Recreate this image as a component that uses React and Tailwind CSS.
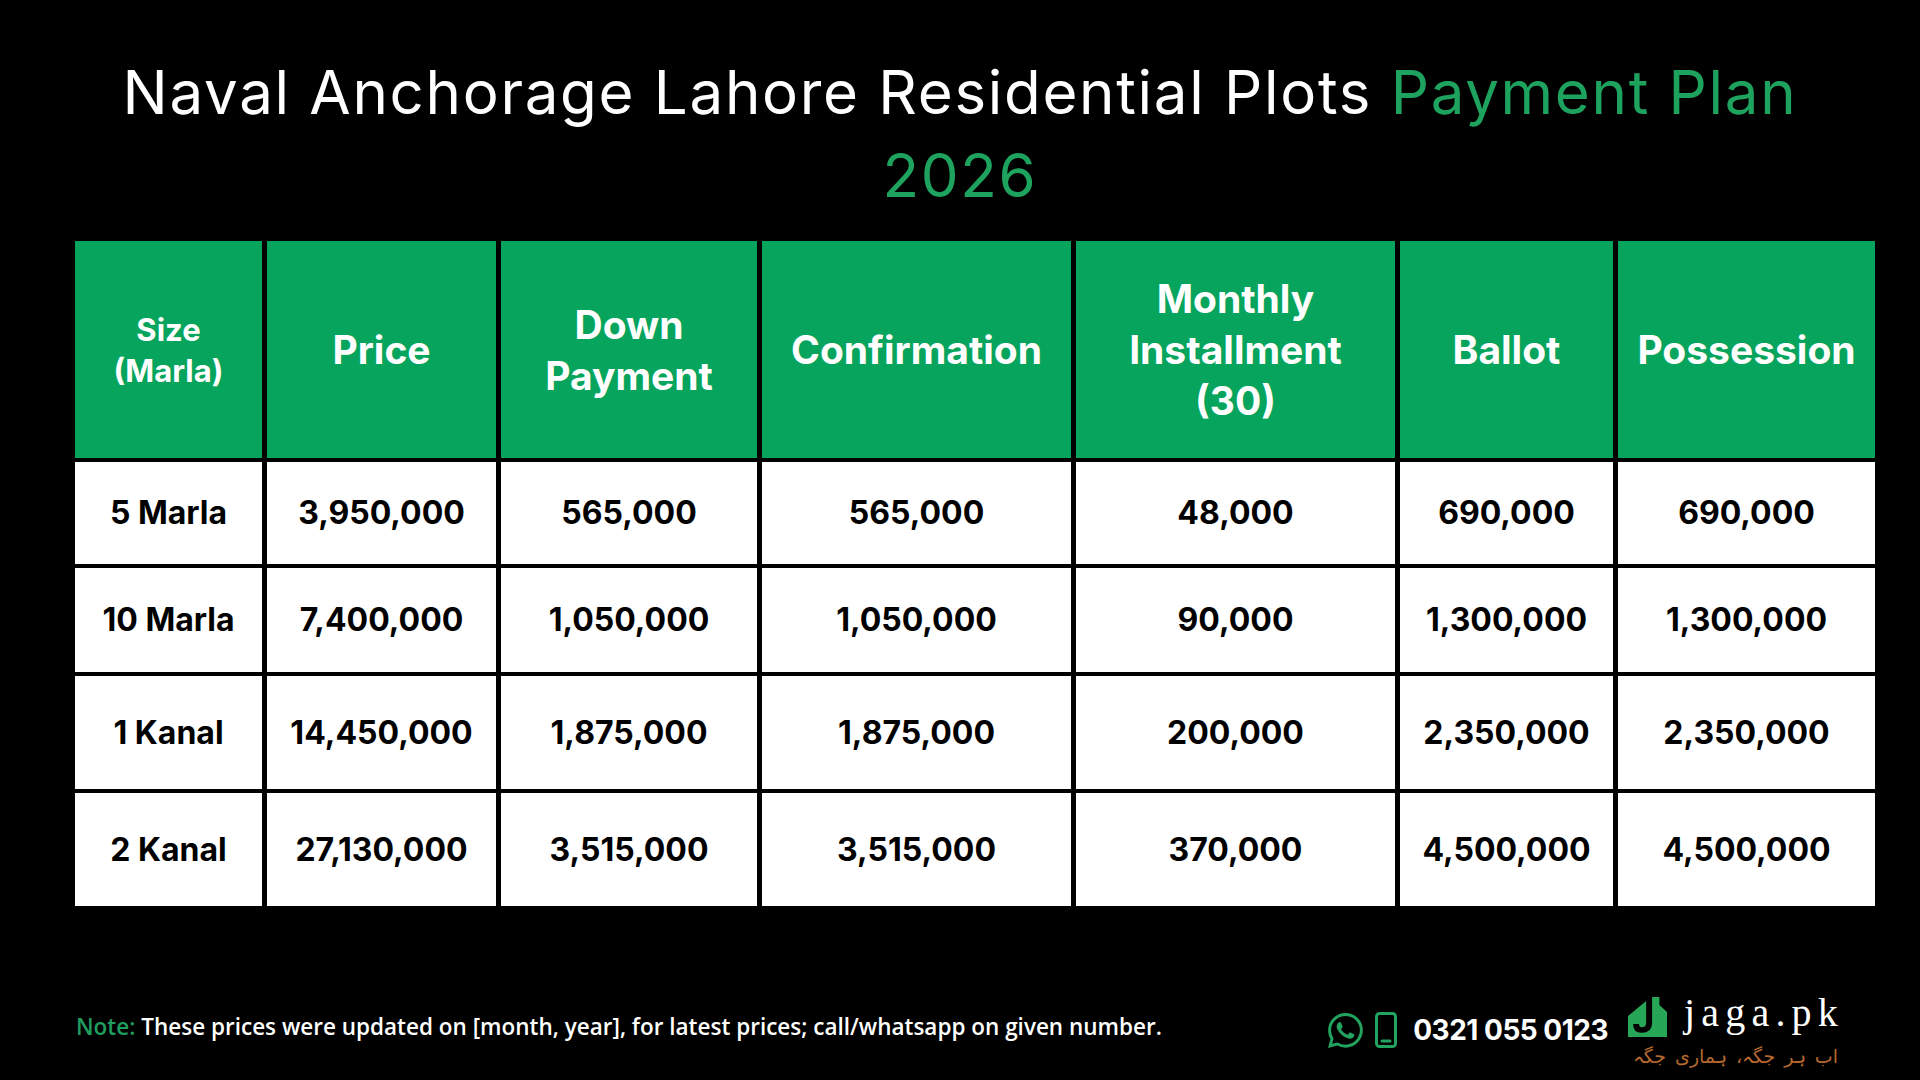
import React from "react";

const headers = [
  { label: ["Size", "(Marla)"], small: true },
  { label: ["Price"] },
  { label: ["Down", "Payment"] },
  { label: ["Confirmation"] },
  { label: ["Monthly", "Installment", "(30)"] },
  { label: ["Ballot"] },
  { label: ["Possession"] },
];

const rows = [
  ["5 Marla", "3,950,000", "565,000", "565,000", "48,000", "690,000", "690,000"],
  ["10 Marla", "7,400,000", "1,050,000", "1,050,000", "90,000", "1,300,000", "1,300,000"],
  ["1 Kanal", "14,450,000", "1,875,000", "1,875,000", "200,000", "2,350,000", "2,350,000"],
  ["2 Kanal", "27,130,000", "3,515,000", "3,515,000", "370,000", "4,500,000", "4,500,000"],
];

const WhatsAppIcon = () => (
  <svg width="35" height="35" viewBox="0 0 16 16" fill="#22a35f">
    <path d="M13.601 2.326A7.854 7.854 0 0 0 7.994 0C3.627 0 .068 3.558.064 7.926c0 1.399.366 2.76 1.057 3.965L0 16l4.204-1.102a7.933 7.933 0 0 0 3.79.965h.004c4.368 0 7.926-3.558 7.930-7.930A7.898 7.898 0 0 0 13.6 2.326zM7.994 14.521a6.573 6.573 0 0 1-3.356-.92l-.24-.144-2.494.654.666-2.433-.156-.251a6.56 6.56 0 0 1-1.007-3.505c0-3.626 2.957-6.584 6.591-6.584a6.560 6.560 0 0 1 4.66 1.931 6.557 6.557 0 0 1 1.928 4.66c-.004 3.639-2.961 6.592-6.592 6.592zm3.615-4.934c-.197-.099-1.17-.578-1.353-.646-.182-.065-.315-.099-.445.099-.133.197-.513.646-.627.775-.114.133-.232.148-.43.05-.197-.1-.836-.308-1.592-.985-.59-.525-.985-1.175-1.103-1.372-.114-.198-.011-.304.088-.403.087-.088.197-.232.296-.346.1-.114.133-.198.198-.33.065-.134.034-.248-.015-.347-.05-.099-.445-1.076-.612-1.47-.16-.389-.323-.335-.445-.34-.114-.007-.247-.007-.38-.007a.729.729 0 0 0-.529.247c-.182.198-.691.677-.691 1.654 0 .977.71 1.916.81 2.049.098.133 1.394 2.132 3.383 2.992.47.205.84.326 1.129.418.475.152.904.129 1.246.08.38-.058 1.171-.48 1.338-.943.164-.464.164-.86.114-.943-.049-.084-.182-.133-.38-.232z" />
  </svg>
);

const PhoneIcon = () => (
  <svg width="22" height="36" viewBox="0 0 22 36" fill="none" stroke="#22a35f" strokeWidth="3">
    <rect x="1.5" y="1.5" width="19" height="33" rx="3" />
    <line x1="7" y1="29" x2="15" y2="29" strokeLinecap="round" />
  </svg>
);

// green house with a black "J" cut through it
const HouseLogo = () => (
  <svg width="39" height="40" viewBox="0 0 36 40" className="mt-[4px]" preserveAspectRatio="none">
    <polygon points="0,40 0,19 19,2 22,2 22,0 29,0 29,8 36,15 36,40" fill="#27a658" />
    <path d="M19.5 0 V26 Q19.5 33 12.5 33 Q7.5 33 7.5 27" fill="none" stroke="#000" strokeWidth="5.5" />
  </svg>
);

export default function App() {
  return (
    <div className="w-[1920px] h-[1080px] bg-black flex flex-col overflow-hidden" style={{ fontFamily: "Inter, 'Open Sans', sans-serif" }}>
      {/* Title */}
      <h1 className="pt-[51px] text-center text-[60px] leading-[83px] font-normal text-white tracking-[1.7px]">
        Naval Anchorage Lahore Residential Plots <span className="text-[#1ea35f]">Payment Plan</span>
        <br />
        <span className="text-[#1ea35f]">2026</span>
      </h1>

      {/* Payment table */}
      <div className="ml-[75px] mt-[24px] grid grid-cols-[187px_229px_256px_309px_319px_213px_257px] grid-rows-[217px_102px_104px_113px_113px] gap-x-[5px] gap-y-[4px]">
        {headers.map((h, i) => (
          <div
            key={i}
            className={
              h.small
                ? "bg-[#06a45c] flex flex-col items-center justify-center text-white font-bold text-[31px] leading-[41px]"
                : "bg-[#06a45c] flex flex-col items-center justify-center text-white font-bold text-[39px] leading-[51px]"
            }
          >
            {h.label.map((l) => (
              <span key={l}>{l}</span>
            ))}
          </div>
        ))}
        {rows.map((r, ri) =>
          r.map((c, ci) => (
            <div key={ri + "-" + ci} className="bg-white flex items-center justify-center text-black font-bold text-[32px]">
              {c}
            </div>
          ))
        )}
      </div>

      {/* Footer */}
      <div className="mt-[84px] h-[80px] pl-[76px] pr-[82px] flex items-center justify-between">
        <p className="pb-[6px] text-[22.5px] leading-[30px] font-semibold text-white" style={{ fontFamily: "'Open Sans', sans-serif" }}>
          <span className="text-[#1f9d5e]">Note:</span> These prices were updated on [month, year], for latest prices; call/whatsapp on given number.
        </p>

        <div className="flex items-center">
          <WhatsAppIcon />
          <div className="ml-[12px]">
            <PhoneIcon />
          </div>
          <span className="ml-[16px] text-white font-bold text-[28px] tracking-[-0.5px]">0321 055 0123</span>
          <div className="ml-[20px] flex flex-col items-end">
            <div className="flex items-start gap-[17px]">
              <HouseLogo />
              <span className="mr-[-6px] text-white text-[40px] leading-[40px] tracking-[6.2px]" style={{ fontFamily: "'Liberation Serif', serif" }}>
                jaga.pk
              </span>
            </div>
            <span dir="rtl" className="mt-[8px] text-[#b5672d] text-[19px] leading-[22px] [word-spacing:3px]" style={{ fontFamily: "'DejaVu Sans', sans-serif" }}>
              اب ہر جگہ، ہماری جگہ
            </span>
          </div>
        </div>
      </div>
    </div>
  );
}
